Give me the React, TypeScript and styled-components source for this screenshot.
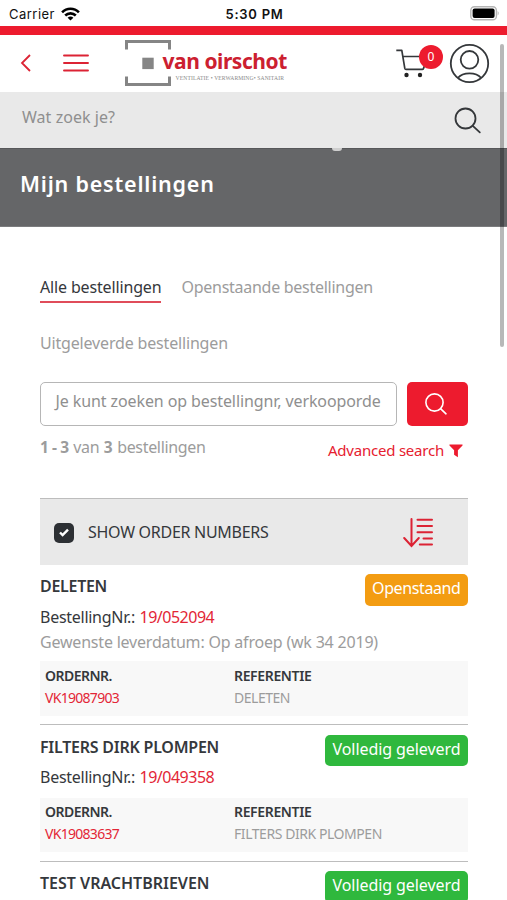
import React from 'react';
import styled, { createGlobalStyle } from 'styled-components';

const RED = '#ed1b2e';
const INK = '#35383c';
const MUTED = '#9c9c9c';

const GlobalStyle = createGlobalStyle`
  * { box-sizing: border-box; }
  body { margin: 0; background: #fff; overflow: hidden; }
`;

const Screen = styled.div`
  position: relative;
  display: flex;
  flex-direction: column;
  width: 507px;
  height: 900px;
  overflow: hidden;
  background: #fff;
  font-family: 'Noto Sans', 'Open Sans', sans-serif;
  color: ${INK};
`;

interface TextProps {
  $size?: number;
  $spacing?: number;
  $weight?: number;
  $color?: string;
}

const Text = styled.span<TextProps>`
  display: block;
  flex: none;
  font-size: ${p => p.$size ?? 16}px;
  line-height: 24px;
  letter-spacing: ${p => p.$spacing ?? 0}px;
  font-weight: ${p => p.$weight ?? 400};
  color: ${p => p.$color ?? INK};
  white-space: nowrap;
`;

const StatusBar = styled.div`
  display: grid;
  grid-template-columns: 1fr auto 1fr;
  align-items: center;
  flex: none;
  height: 25.5px;
  padding: 2px 7px 0 9px;
  font-family: Inter, sans-serif;
  font-size: 13px;
  color: #111;
`;

const Carrier = styled.div`
  display: flex;
  align-items: center;
  gap: 6px;
  letter-spacing: 0.48px;
`;

const Clock = styled.div`
  font-weight: 600;
  letter-spacing: 0.74px;
`;

const BatteryIcon = styled.svg`
  justify-self: end;
`;

const RedStripe = styled.div`
  flex: none;
  height: 9.5px;
  background: ${RED};
`;

const Header = styled.header`
  display: flex;
  align-items: center;
  flex: none;
  height: 56.5px;
  padding: 0 17px 0 20px;
`;

const BackIcon = styled.svg`
  margin-right: 31px;
`;

const Logo = styled.div`
  display: flex;
  width: 166px;
  height: 46px;
  margin-left: 35.5px;
`;

const LogoMark = styled.svg`
  flex: none;
  width: 46px;
`;

const LogoWords = styled.div`
  display: flex;
  flex-direction: column;
  margin-left: -8px;
`;

const LogoName = styled.div`
  height: 35px;
  padding-top: 9px;
  font-size: 21px;
  line-height: 25px;
  font-weight: 700;
  letter-spacing: -0.45px;
  color: #cc2030;
  white-space: nowrap;
`;

const LogoTagline = styled.div`
  padding-left: 13px;
  font-family: 'Liberation Serif', serif;
  font-size: 5.6px;
  line-height: 7px;
  letter-spacing: 0.13px;
  color: #8a8a8a;
  white-space: nowrap;
`;

const CartButton = styled.div`
  position: relative;
  width: 48px;
  height: 40px;
  margin-left: auto;
`;

const CartBadge = styled.div`
  position: absolute;
  left: 24px;
  top: 2px;
  width: 24px;
  height: 24px;
  border-radius: 50%;
  background: ${RED};
  color: #fff;
  font-size: 12px;
  line-height: 24px;
  text-align: center;
`;

const UserIcon = styled.svg`
  margin-left: 6px;
`;

const SiteSearch = styled.div`
  display: flex;
  justify-content: space-between;
  flex: none;
  height: 56px;
  padding: 13px 25px 0 22px;
  background: #e9e9e9;
`;

const SiteSearchIcon = styled.svg`
  margin-top: 1px;
`;

const TitleBar = styled.div`
  position: relative;
  flex: none;
  height: 79px;
  padding: 23px 20px 0;
  border-top: 1px solid #57585a;
  border-bottom: 1px solid #7b7c7e;
  background: #656668;
`;

const Droplet = styled.div`
  position: absolute;
  left: 332px;
  top: -1px;
  width: 10px;
  height: 3px;
  border-radius: 0 0 5px 5px;
  background: #cfcfcf;
`;

const Content = styled.main`
  display: flex;
  flex-direction: column;
  flex: none;
  padding: 48px 39px 0 40px;
`;

const Tabs = styled.nav`
  display: flex;
  flex-wrap: wrap;
  column-gap: 20px;
  row-gap: 28.5px;
`;

const Tab = styled(Text)<{ $active?: boolean }>`
  height: 28px;
  color: ${p => (p.$active ? INK : MUTED)};
  border-bottom: 2px solid ${p => (p.$active ? '#e04c5a' : 'transparent')};
`;

const SearchRow = styled.div`
  display: flex;
  gap: 9.5px;
  height: 44px;
  margin-top: 23px;
`;

const SearchField = styled.div`
  flex: 1;
  padding: 6px 14.5px;
  border: 1.5px solid #b6b6b6;
  border-radius: 5px;
`;

const SearchButton = styled.div`
  display: flex;
  align-items: center;
  justify-content: center;
  width: 61.5px;
  border-radius: 5px;
  background: ${RED};
`;

const ResultsRow = styled.div`
  display: flex;
  justify-content: space-between;
  height: 48px;
  margin-top: 8.5px;
  padding-right: 5.5px;
`;

const ResultCount = styled.div`
  display: flex;
  gap: 4.5px;
`;

const AdvancedLink = styled.div`
  display: flex;
  gap: 4.5px;
  padding-top: 3px;
`;

const FunnelIcon = styled.svg`
  margin-top: 6px;
`;

const OrderToolbar = styled.div`
  display: flex;
  align-items: center;
  height: 66.5px;
  margin-top: 15.5px;
  padding: 0 34px 0 14px;
  border-top: 1px solid #bdbdbd;
  background: #e9e9e9;
`;

const Checkbox = styled.div`
  display: flex;
  align-items: center;
  justify-content: center;
  width: 20px;
  height: 20px;
  margin: 2px 14px 0 0;
  border-radius: 5px;
  background: #2d3034;
`;

const SortIcon = styled.svg`
  margin: 3px 0 0 auto;
`;

const Order = styled.article`
  padding: 9.5px 0 8.5px;
  border-bottom: 1.5px solid #bdbdbd;

  &:last-child {
    padding-bottom: 0;
    border-bottom: none;
  }
`;

const OrderHead = styled.div`
  display: flex;
  justify-content: space-between;
  height: 30.5px;
`;

const StatusBadge = styled.div<{ $open?: boolean }>`
  height: 31.5px;
  padding: 2px 7.5px 0;
  border-radius: 5px;
  background: ${p => (p.$open ? '#f39c12' : '#2fb83d')};
`;

const OrderNumber = styled.div`
  display: flex;
  gap: 4.5px;
  height: 25.5px;
`;

const Detail = styled.dl`
  display: grid;
  grid-template-columns: 189px 1fr;
  height: 54.5px;
  margin: 7px 0 0;
  padding: 2.5px 5px 0;
  background: #f8f8f8;
`;

const DetailCell = styled.div`
  display: flex;
  flex-direction: column;
`;

const DetailText = styled(Text)`
  height: 22px;
`;

const ScrollThumb = styled.div`
  position: absolute;
  left: 499.5px;
  top: 44px;
  width: 4.5px;
  height: 303px;
  border-radius: 2px;
  background: rgba(0, 0, 0, 0.28);
`;

interface OrderData {
  title: string;
  titleSpacing: number;
  status: string;
  open?: boolean;
  number?: string;
  delivery?: string;
  order?: string;
  reference?: string;
  referenceSpacing?: number;
}

const orders: OrderData[] = [
  {
    title: 'DELETEN', titleSpacing: -0.29, status: 'Openstaand', open: true, number: '19/052094',
    delivery: 'Gewenste leverdatum: Op afroep (wk 34 2019)', order: 'VK19087903',
    reference: 'DELETEN', referenceSpacing: -0.48,
  },
  {
    title: 'FILTERS DIRK PLOMPEN', titleSpacing: -0.24, status: 'Volledig geleverd', number: '19/049358',
    order: 'VK19083637', reference: 'FILTERS DIRK PLOMPEN', referenceSpacing: -0.44,
  },
  { title: 'TEST VRACHTBRIEVEN', titleSpacing: -0.01, status: 'Volledig geleverd' },
];

function OrderItem({ data }: { data: OrderData }) {
  return (
    <Order>
      <OrderHead>
        <Text $weight={600} $spacing={data.titleSpacing}>{data.title}</Text>
        <StatusBadge $open={data.open}>
          <Text $color="#fff" $spacing={data.open ? -0.39 : -0.07}>{data.status}</Text>
        </StatusBadge>
      </OrderHead>
      {data.number && (
        <OrderNumber>
          <Text $spacing={-0.27}>BestellingNr.:</Text>
          <Text $spacing={-0.5} $color="#e32636">{data.number}</Text>
        </OrderNumber>
      )}
      {data.delivery && <Text $spacing={-0.2} $color={MUTED}>{data.delivery}</Text>}
      {data.order && (
        <Detail>
          <DetailCell>
            <DetailText $size={14} $weight={600} $spacing={-0.51}>ORDERNR.</DetailText>
            <DetailText $size={14} $spacing={-0.71} $color="#e32636">{data.order}</DetailText>
          </DetailCell>
          <DetailCell>
            <DetailText $size={14} $weight={600} $spacing={-0.35}>REFERENTIE</DetailText>
            <DetailText $size={14} $spacing={data.referenceSpacing} $color={MUTED}>{data.reference}</DetailText>
          </DetailCell>
        </Detail>
      )}
    </Order>
  );
}

export default function App() {
  return (
    <Screen>
      <GlobalStyle />
      <StatusBar>
        <Carrier>
          Carrier
          <svg width="19" height="14" viewBox="0 0 19 14" fill="none" stroke="#000" strokeWidth="2.6">
            <path d="M1.1 5.3C5.8.6 13.2.6 17.9 5.3" />
            <path d="M4.2 8.5c3-2.9 7.6-2.9 10.6 0" />
            <path d="M9.5 13.6 6.6 10.7c1.7-1.5 4.1-1.5 5.8 0z" fill="#000" stroke="none" />
          </svg>
        </Carrier>
        <Clock>5:30 PM</Clock>
        <BatteryIcon width="30" height="15" viewBox="0 0 30 15">
          <rect x=".8" y=".8" width="25.6" height="13" rx="3.6" fill="#fff" stroke="#b5b5b5" strokeWidth="1.4" />
          <rect x="2.6" y="2.5" width="22" height="9.6" rx="2" fill="#000" />
          <path d="M27.7 5q1.9 2.2 0 4.6z" fill="#adadad" />
        </BatteryIcon>
      </StatusBar>
      <RedStripe />
      <Header>
        <BackIcon width="12" height="18" viewBox="0 0 12 18" fill="none" stroke="#dc2334" strokeWidth="1.8">
          <path d="M10 1 2 9l8 8" />
        </BackIcon>
        <svg width="26" height="18" viewBox="0 0 26 18" stroke="#dc2334" strokeWidth="1.9" strokeLinecap="round">
          <path d="M1 1.5h24M1 9h24M1 16.5h24" />
        </svg>
        <Logo>
          <LogoMark viewBox="0 0 46 46" fill="none" stroke="#858585" strokeWidth="3">
            <path d="M1.5 9.5v-8h43v8M1.5 36.5v8h43v-8" />
            <rect x="17.3" y="17.7" width="11.4" height="11.4" fill="#858585" stroke="none" />
          </LogoMark>
          <LogoWords>
            <LogoName>van oirschot</LogoName>
            <LogoTagline>VENTILATIE • VERWARMING• SANITAIR</LogoTagline>
          </LogoWords>
        </Logo>
        <CartButton>
          <svg width="36" height="40" viewBox="0 0 36 40" fill="none" stroke="#34373a" strokeWidth="1.7">
            <path d="M1.3 7.3h5.5l3 18.1q.2 1 1.2 1h16.2q1 0 1.3-1L33 13.5H8" strokeLinejoin="round" />
            <circle cx="11.5" cy="32" r="2.2" fill="#222" stroke="none" />
            <circle cx="25" cy="32" r="2.2" fill="#222" stroke="none" />
          </svg>
          <CartBadge>0</CartBadge>
        </CartButton>
        <UserIcon width="41" height="41" viewBox="0 0 41 41" fill="none" stroke="#34373a" strokeWidth="1.8">
          <circle cx="20.5" cy="20.5" r="18.7" />
          <circle cx="20.5" cy="16.8" r="8.8" />
          <path d="M8.8 35c5.2-6.2 18.2-6.2 23.4 0" />
        </UserIcon>
      </Header>
      <SiteSearch>
        <Text $color="#8f8f8f" $spacing={0.04}>Wat zoek je?</Text>
        <SiteSearchIcon width="28" height="28" viewBox="0 0 28 28" fill="none" stroke="#34373a" strokeWidth="1.8" strokeLinecap="round">
          <circle cx="11.5" cy="12.5" r="10" />
          <path d="m18.8 19.8 7 6.5" />
        </SiteSearchIcon>
      </SiteSearch>
      <TitleBar>
        <Droplet />
        <Text $size={21.5} $weight={600} $spacing={0.8} $color="#fff">Mijn bestellingen</Text>
      </TitleBar>
      <Content>
        <Tabs>
          <Tab $active $spacing={-0.15}>Alle bestellingen</Tab>
          <Tab $spacing={-0.27}>Openstaande bestellingen</Tab>
          <Tab $spacing={-0.17}>Uitgeleverde bestellingen</Tab>
        </Tabs>
        <SearchRow>
          <SearchField>
            <Text $color="#8f8f8f" $spacing={-0.1}>Je kunt zoeken op bestellingnr, verkooporde</Text>
          </SearchField>
          <SearchButton>
            <svg width="24" height="24" viewBox="0 0 24 24" fill="none" stroke="#fff" strokeWidth="1.6" strokeLinecap="round">
              <circle cx="9.5" cy="10.5" r="8.6" />
              <path d="m15.8 16.8 5.2 5" />
            </svg>
          </SearchButton>
        </SearchRow>
        <ResultsRow>
          <ResultCount>
            <Text $color={MUTED} $size={15.5} $weight={700} $spacing={-0.4}>1 - 3</Text>
            <Text $color={MUTED} $spacing={-0.33}>van</Text>
            <Text $color={MUTED} $size={15.5} $weight={700}>3</Text>
            <Text $color={MUTED} $spacing={-0.33}>bestellingen</Text>
          </ResultCount>
          <AdvancedLink>
            <Text $size={15} $color="#e6202f" $spacing={-0.22}>Advanced search</Text>
            <FunnelIcon width="14" height="14" viewBox="0 0 14 14" fill={RED}>
              <path d="M.8.5h12.4q.8.1.3.9L8.9 6.3v7L5.1 10.8V6.3L.5 1.4Q0 .6.8.5z" />
            </FunnelIcon>
          </AdvancedLink>
        </ResultsRow>
        <OrderToolbar>
          <Checkbox>
            <svg width="10" height="9" viewBox="0 0 10 9" fill="none" stroke="#fff" strokeWidth="2.4">
              <path d="m1 4.5 2.6 2.6L9 1.6" />
            </svg>
          </Checkbox>
          <Text $spacing={-0.28}>SHOW ORDER NUMBERS</Text>
          <SortIcon width="31" height="30" viewBox="0 0 31 30" fill="none" stroke="#dc2334" strokeWidth="2" strokeLinecap="round">
            <path d="M8.5 1v26.5M1.2 20l7.3 8 7.3-8" />
            <path d="M14.5 1.8H29M14.5 8H29M14.5 14.2H29M20.5 20.4H29M16.8 26.6H29" />
          </SortIcon>
        </OrderToolbar>
        {orders.map(o => <OrderItem key={o.title} data={o} />)}
      </Content>
      <ScrollThumb />
    </Screen>
  );
}
